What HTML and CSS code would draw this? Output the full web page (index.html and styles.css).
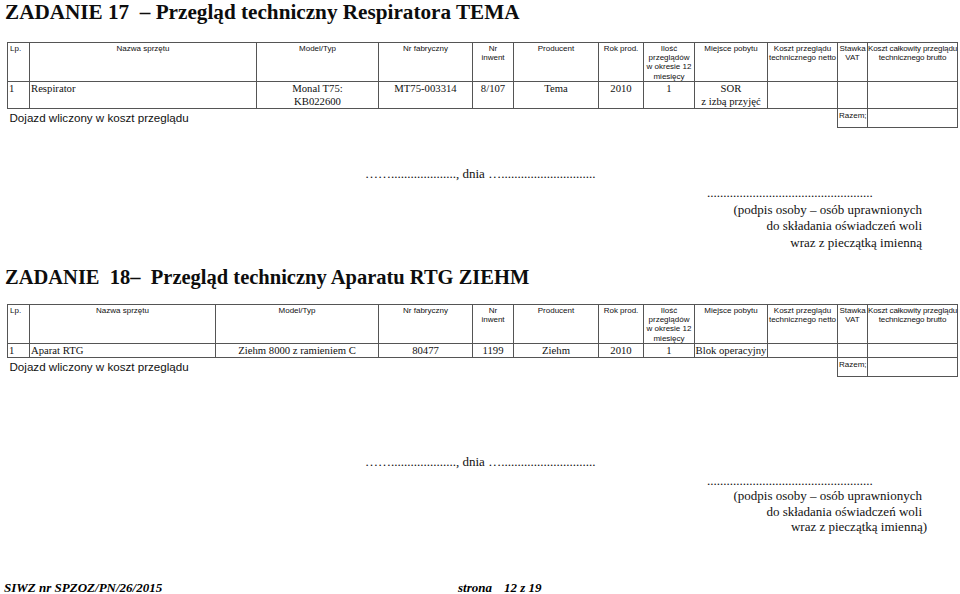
FILE: index.html
```html
<!DOCTYPE html>
<html lang="pl">
<head>
<meta charset="utf-8">
<title>ZADANIE 17 i 18</title>
<link rel="stylesheet" href="styles.css">
</head>
<body>
<div class="page">
  <h1 class="title title-1">ZADANIE 17&nbsp; – Przegląd techniczny Respiratora TEMA</h1>
  <table class="grid grid-1">
    <colgroup>
      <col class="w-lp"><col class="w-name"><col class="w-model"><col class="w-fab"><col class="w-inw"><col class="w-prod"><col class="w-rok"><col class="w-ilosc"><col class="w-miej"><col class="w-netto"><col class="w-vat"><col class="w-brutto">
    </colgroup>
    <tr class="head">
      <th class="left">Lp.</th><th>Nazwa sprzętu</th><th>Model/Typ</th><th>Nr fabryczny</th><th>Nr<br>inwent</th><th>Producent</th><th>Rok prod.</th><th>Ilość<br>przeglądów<br>w okresie 12<br>miesięcy</th><th>Miejsce pobytu</th><th>Koszt przeglądu<br>technicznego netto</th><th>Stawka<br>VAT</th><th class="tight">Koszt całkowity przeglądu<br>technicznego brutto</th>
    </tr>
    <tr class="row row-1">
      <td class="left">1</td><td class="left">Respirator</td><td>Monal T75:<br>KB022600</td><td>MT75-003314</td><td>8/107</td><td>Tema</td><td>2010</td><td>1</td><td>SOR<br>z izbą przyjęć</td><td></td><td></td><td></td>
    </tr>
    <tr class="sum">
      <td colspan="10" class="note">Dojazd wliczony w koszt przeglądu</td><td class="razem">Razem;</td><td></td>
    </tr>
  </table>

  <p class="date date-1">……...................., dnia ….............................</p>
  <div class="sign">
    <div class="dots">...................................................</div>
    <div class="line">(podpis osoby – osób uprawnionych</div>
    <div class="line">do składania oświadczeń woli</div>
    <div class="line">wraz z pieczątką imienną</div>
  </div>

  <h1 class="title title-2">ZADANIE&nbsp; 18–&nbsp; Przegląd techniczny Aparatu RTG ZIEHM</h1>
  <table class="grid grid-2">
    <colgroup>
      <col class="w-lp"><col class="w-name2"><col class="w-model2"><col class="w-fab"><col class="w-inw"><col class="w-prod"><col class="w-rok"><col class="w-ilosc"><col class="w-miej"><col class="w-netto"><col class="w-vat"><col class="w-brutto">
    </colgroup>
    <tr class="head">
      <th class="left">Lp.</th><th>Nazwa sprzętu</th><th>Model/Typ</th><th>Nr fabryczny</th><th>Nr<br>inwent</th><th>Producent</th><th>Rok prod.</th><th>Ilość<br>przeglądów<br>w okresie 12<br>miesięcy</th><th>Miejsce pobytu</th><th>Koszt przeglądu<br>technicznego netto</th><th>Stawka<br>VAT</th><th class="tight">Koszt całkowity przeglądu<br>technicznego brutto</th>
    </tr>
    <tr class="row row-2">
      <td class="left">1</td><td class="left">Aparat RTG</td><td>Ziehm 8000 z ramieniem C</td><td>80477</td><td>1199</td><td>Ziehm</td><td>2010</td><td>1</td><td>Blok operacyjny</td><td></td><td></td><td></td>
    </tr>
    <tr class="sum">
      <td colspan="10" class="note">Dojazd wliczony w koszt przeglądu</td><td class="razem">Razem;</td><td></td>
    </tr>
  </table>

  <p class="date date-2">……...................., dnia ….............................</p>
  <div class="sign sign-2">
    <div class="dots">...................................................</div>
    <div class="line">(podpis osoby – osób uprawnionych</div>
    <div class="line">do składania oświadczeń woli</div>
    <div class="line line-out">wraz z pieczątką imienną)</div>
  </div>

  <footer class="footer">
    <span class="doc">SIWZ nr SPZOZ/PN/26/2015</span>
    <span class="pageno">strona</span>
    <span class="pagenum">12 z 19</span>
  </footer>
</div>
</body>
</html>
```

FILE: styles.css
```css
* { box-sizing: border-box; }
html, body { margin: 0; padding: 0; background: #fff; color: #000; }
body { width: 960px; height: 594px; overflow: hidden; }
.page { position: relative; }

.title {
  margin: 0;
  padding-left: 5px;
  font-family: "Liberation Serif", serif;
  font-weight: bold;
  line-height: 24px;
  color: #0d0d0d;
  white-space: nowrap;
}
.title-1 { font-size: 21.2px; }
.title-2 { font-size: 20.5px; margin-top: 14px; }

.grid {
  border-collapse: collapse;
  table-layout: fixed;
  width: 951px;
  margin-left: 7px;
}
.grid-1 { margin-top: 18px; }
.grid-2 { margin-top: 15px; }

.w-lp { width: 22px; }
.w-name { width: 227px; }
.w-model { width: 122px; }
.w-name2 { width: 186px; }
.w-model2 { width: 163px; }
.w-fab { width: 94px; }
.w-inw { width: 41px; }
.w-prod { width: 85px; }
.w-rok { width: 45px; }
.w-ilosc { width: 51px; }
.w-miej { width: 73px; }
.w-netto { width: 70px; }
.w-vat { width: 30px; }
.w-brutto { width: 90px; }

.grid th, .grid td {
  border: 1px solid #555;
  padding: 0;
}
.grid th {
  height: 39px;
  padding-top: 1px;
  font-family: "Liberation Sans", sans-serif;
  font-weight: normal;
  font-size: 8px;
  line-height: 9.2px;
  text-align: center;
  vertical-align: top;
  white-space: nowrap;
  color: #111;
}
.grid th.tight { letter-spacing: -0.12px; }
.grid .left { text-align: left; padding-left: 2px; }

.row td {
  font-family: "Liberation Serif", serif;
  font-size: 10.7px;
  line-height: 13px;
  text-align: center;
  vertical-align: top;
  white-space: nowrap;
  color: #111;
}
.row-1 td { height: 26px; }
.row-2 td { height: 13px; }
.row td.left { padding-left: 1px; }

.sum td { height: 19px; }
.grid .sum .note {
  border: none;
  padding-left: 2px;
  font-family: "Liberation Sans", sans-serif;
  font-size: 11.6px;
  line-height: 14px;
  vertical-align: middle;
  white-space: nowrap;
  color: #111;
}
.grid .sum .razem {
  padding: 2px 0 0 1px;
  font-family: "Liberation Sans", sans-serif;
  font-size: 8px;
  line-height: 9px;
  vertical-align: top;
  color: #111;
}

.date {
  margin: 38px 0 0 365px;
  font-family: "Liberation Serif", serif;
  font-size: 13px;
  line-height: 16px;
  white-space: nowrap;
  color: #111;
}
.date-2 { margin-top: 77px; }

.sign {
  margin: 3px 0 0 707px;
  width: 215px;
  font-family: "Liberation Serif", serif;
  font-size: 13px;
  line-height: 16.5px;
  color: #111;
}
.sign-2 { line-height: 15.3px; }
.sign .dots { text-align: left; white-space: nowrap; }
.sign .line { text-align: right; white-space: nowrap; }
.sign .line-out { margin-right: -5px; }

.footer {
  display: flex;
  margin-top: 46px;
  padding-left: 4px;
  font-family: "Liberation Serif", serif;
  font-weight: bold;
  font-style: italic;
  font-size: 13px;
  line-height: 16px;
  white-space: nowrap;
}
.footer .doc { width: 454px; }
.footer .pagenum { margin-left: 12px; }
```
